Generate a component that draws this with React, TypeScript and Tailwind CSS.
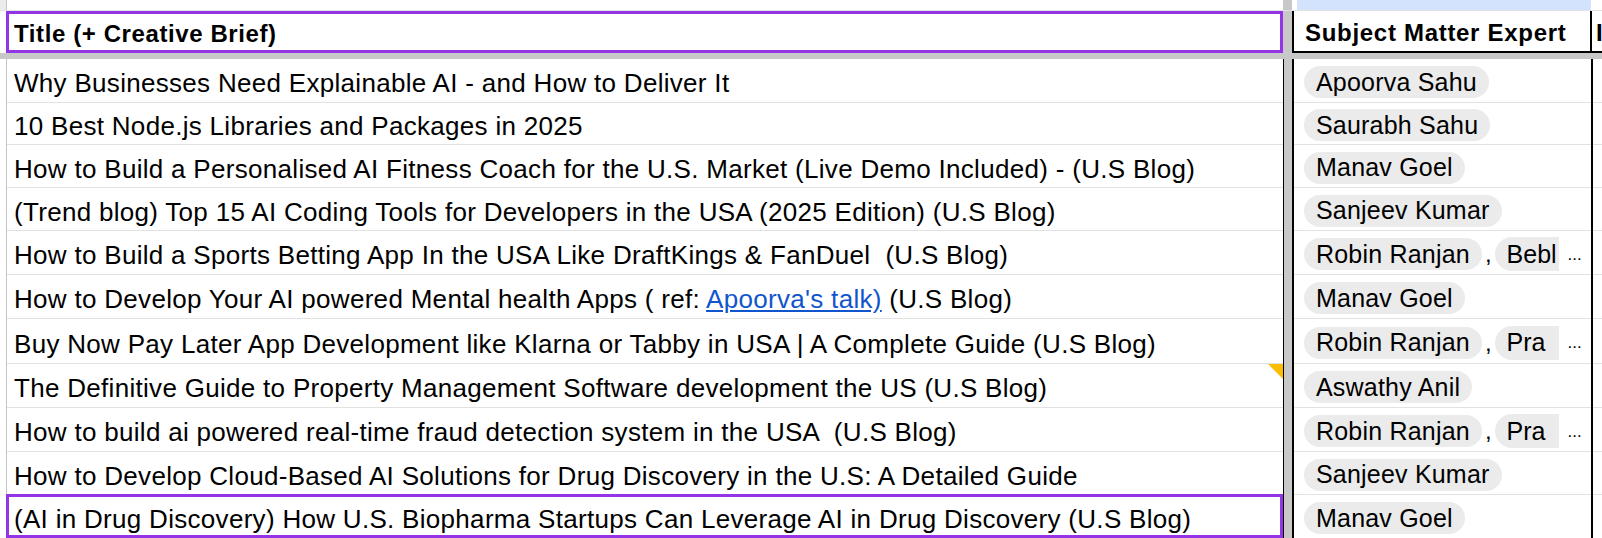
import React from "react";

type Row = {
  h: string;
  title: React.ReactNode;
  chips: string[];
  clip?: string;
  note?: boolean;
  selected?: boolean;
};

const rows: Row[] = [
  { h: "h-[44px]", title: "Why Businesses Need Explainable AI - and How to Deliver It", chips: ["Apoorva Sahu"] },
  { h: "h-[42px]", title: "10 Best Node.js Libraries and Packages in 2025", chips: ["Saurabh Sahu"] },
  { h: "h-[43px]", title: "How to Build a Personalised AI Fitness Coach for the U.S. Market (Live Demo Included) - (U.S Blog)", chips: ["Manav Goel"] },
  { h: "h-[43px]", title: "(Trend blog) Top 15 AI Coding Tools for Developers in the USA (2025 Edition) (U.S Blog)", chips: ["Sanjeev Kumar"] },
  { h: "h-[44px]", title: "How to Build a Sports Betting App In the USA Like DraftKings & FanDuel  (U.S Blog)", chips: ["Robin Ranjan"], clip: "Bebl" },
  {
    h: "h-[44px]",
    title: (
      <>
        How to Develop Your AI powered Mental health Apps ( ref:{" "}
        <span className="text-[#1155cc] underline">Apoorva's talk)</span> (U.S Blog)
      </>
    ),
    chips: ["Manav Goel"],
  },
  { h: "h-[45px]", title: "Buy Now Pay Later App Development like Klarna or Tabby in USA | A Complete Guide (U.S Blog)", chips: ["Robin Ranjan"], clip: "Pra" },
  { h: "h-[44px]", title: "The Definitive Guide to Property Management Software development the US (U.S Blog)", chips: ["Aswathy Anil"], note: true },
  { h: "h-[44px]", title: "How to build ai powered real-time fraud detection system in the USA  (U.S Blog)", chips: ["Robin Ranjan"], clip: "Pra" },
  { h: "h-[43px]", title: "How to Develop Cloud-Based AI Solutions for Drug Discovery in the U.S: A Detailed Guide", chips: ["Sanjeev Kumar"] },
  { h: "h-[44px]", title: "(AI in Drug Discovery) How U.S. Biopharma Startups Can Leverage AI in Drug Discovery (U.S Blog)", chips: ["Manav Goel"], selected: true },
];

function Chip({ label }: { label: string }) {
  return (
    <span className="inline-flex h-[32px] items-center rounded-full bg-[#ebebeb] px-[12px] text-[25px] leading-none tracking-[0.2px] text-black">
      {label}
    </span>
  );
}

export default function App() {
  return (
    <div
      className="relative h-[538px] w-[1602px] overflow-hidden bg-white text-black"
      style={{ fontFamily: '"Liberation Sans", Arial, sans-serif' }}
    >
      {/* top strip */}
      <div className="flex h-[11px] border-b border-[#e2e2e2]">
        <div className="w-[7px] border-r border-[#c4c4c4] bg-[#ececec]" />
        <div className="w-[1276px]" />
        <div className="w-[9px] bg-[#c8c8c8]" />
        <div className="w-[5px]" />
        <div className="w-[294px] bg-[#d3e3fd]" />
        <div className="flex-1" />
      </div>

      {/* header row */}
      <div className="flex h-[42px]">
        <div className="w-[6px]" />
        <div className="flex w-[1277px] items-center border-[3px] border-[#9334e6] pl-[5px] pt-[3px]">
          <span className="text-[24px] font-bold tracking-[0.6px]">Title (+ Creative Brief)</span>
        </div>
        <div className="w-[9px] bg-[#c8c8c8]" />
        <div className="flex w-[298px] items-center border-b-2 border-l-2 border-black pl-[11px] pt-[3px]">
          <span className="whitespace-nowrap text-[24px] font-bold tracking-[0.7px]">Subject Matter Expert</span>
        </div>
        <div className="flex flex-1 items-center overflow-hidden border-b-2 border-l-2 border-black pl-[4px] pt-[3px]">
          <span className="text-[24px] font-bold">I</span>
        </div>
      </div>

      {/* freeze bar */}
      <div className="h-[6px] bg-[#c8c8c8]" />

      {rows.map((r, i) => (
        <div key={i} className={`flex ${r.h}`}>
          <div className="w-[7px] border-r border-[#c4c4c4]" />
          <div className="relative flex w-[1276px] items-center border-b border-[#e2e2e2] pl-[7px] pt-[6px]">
            <span className="whitespace-pre text-[26px] tracking-[0.3px]">{r.title}</span>
            {r.note && (
              <div className="absolute right-0 top-0 h-0 w-0 border-l-[15px] border-t-[15px] border-l-transparent border-t-[#fbbc04]" />
            )}
            {r.selected && (
              <div className="pointer-events-none absolute -left-[1px] -top-[1px] bottom-0 right-0 border-[3px] border-[#9334e6]" />
            )}
          </div>
          <div className="w-[1px] bg-black" />
          <div className="w-[8px] bg-[#c8c8c8]" />
          <div className="w-[2px] bg-black" />
          <div className="flex w-[297px] items-center overflow-hidden whitespace-nowrap border-b border-[#e2e2e2] pl-[10px] pt-[3px]">
            {r.chips.map((c) => (
              <Chip key={c} label={c} />
            ))}
            {r.clip && (
              <>
                <span className="px-[3px] text-[24px]">,</span>
                <span className="inline-flex h-[34px] w-[64px] shrink-0 items-center overflow-hidden rounded-l-full bg-[#ebebeb] pl-[12px] text-[25px] leading-none">
                  {r.clip}
                </span>
                <span className="pl-[9px] text-[17px] leading-none">...</span>
              </>
            )}
          </div>
          <div className="w-[2px] bg-black" />
          <div className="flex-1 border-b border-[#e2e2e2]" />
        </div>
      ))}
      <div className="flex h-[6px]">
        <div className="w-[7px] border-r border-[#c4c4c4]" />
        <div className="w-[1276px]" />
        <div className="w-[1px] bg-black" />
        <div className="w-[8px] bg-[#c8c8c8]" />
        <div className="w-[2px] bg-black" />
        <div className="w-[297px]" />
        <div className="w-[2px] bg-black" />
      </div>
    </div>
  );
}
